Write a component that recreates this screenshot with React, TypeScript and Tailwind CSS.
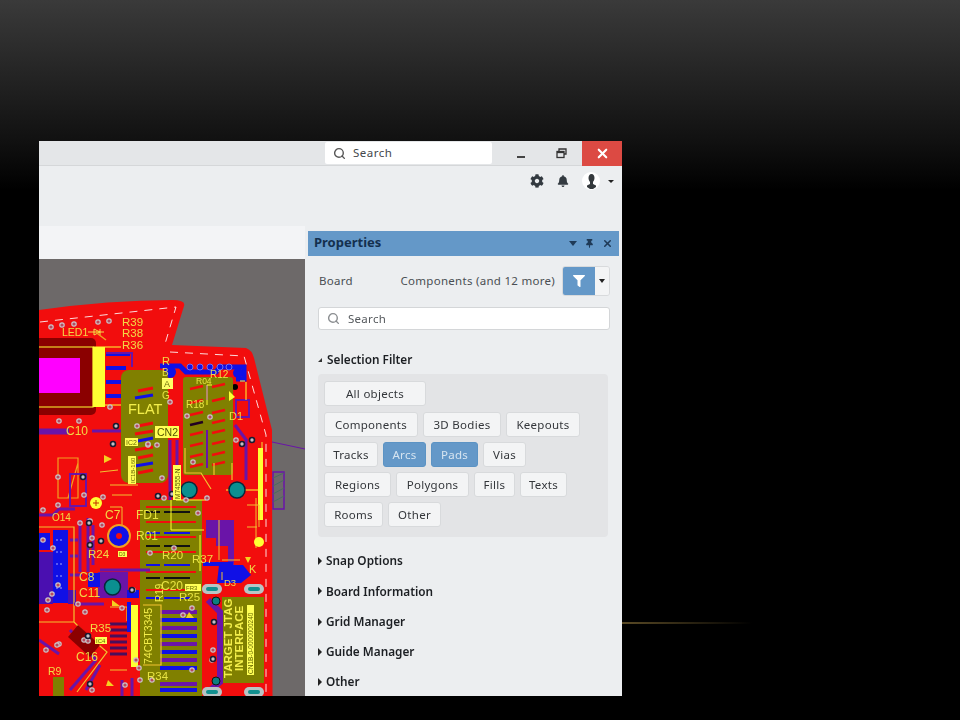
import { FaBell, FaCog, FaFilter, FaThumbtack } from 'react-icons/fa'
import { Search, X } from 'lucide-react'

const red = '#f20d0d'
const olive = '#808000'
const blue = '#1010e6'
const purple = '#6a14a8'
const gold = '#f2c230'
const yellow = '#ffff33'

const vias = [
  [51, 327], [62, 325], [74, 324], [98, 322], [109, 321], [59, 421], [79, 421], [110, 407], [137, 426], [148, 445],
  [148, 444], [157, 445], [170, 402], [187, 416], [210, 417], [193, 462], [162, 478], [236, 440], [252, 440], [164, 498],
  [207, 498], [58, 477], [103, 497], [84, 495], [43, 510], [58, 505], [80, 523], [90, 521], [102, 525], [92, 538],
  [43, 540], [53, 548], [58, 585], [52, 594], [48, 600], [47, 610], [78, 604], [85, 612], [84, 640], [88, 641],
  [59, 644], [46, 650], [57, 645], [122, 608], [133, 590], [136, 660], [139, 668], [125, 685], [92, 690], [140, 680],
  [152, 680], [192, 608], [183, 615], [192, 670], [213, 650], [212, 660], [150, 553], [174, 548], [198, 513], [186, 500],
]

const blackVias = [
  [116, 426], [113, 444], [83, 477], [172, 494], [252, 440], [242, 444], [89, 523], [90, 545], [132, 590], [214, 622],
  [213, 659], [90, 684], [88, 636], [158, 496], [101, 541],
]

const labels: [string, number, number, number?][] = [
  ['R39', 122, 326, 11.5], ['R38', 122, 337, 11.5], ['R36', 122, 349, 11.5], ['LED1', 62, 336, 10.5], ['C10', 66, 435, 12],
  ['R', 162, 365, 11], ['B', 162, 376, 10], ['G', 162, 399, 10], ['R12', 210, 378, 10], ['R04', 196, 384, 8.5],
  ['R18', 186, 408, 10], ['D1', 229, 420, 11], ['C7', 105, 519, 12], ['FD1', 136, 519, 12], ['R01', 136, 540, 12],
  ['R24', 88, 558, 11.5], ['R20', 162, 559, 11.5], ['R37', 192, 563, 11.5], ['C8', 79, 581, 12], ['C11', 79, 597, 12],
  ['C20', 161, 590, 12], ['R25', 179, 601, 11.5], ['R35', 90, 632, 11.5], ['C16', 76, 661, 12], ['D3', 224, 586, 9.5],
  ['K', 249, 573, 11], ['R9', 48, 675, 10.5], ['R34', 147, 680, 11.5], ['O14', 52, 521, 10],
]

const boxes: [string, number, number, number, number][] = [
  ['IC2', 125, 438, 13, 8], ['D3', 118, 551, 9, 6], ['FR3', 185, 584, 16, 7], ['IC4', 95, 637, 12, 7],
]

const Pcb = () => (
  <svg viewBox="39 259 266 437" className="block h-full w-full blur-[0.5px]">
    <rect x="39" y="259" width="266" height="437" fill="#6d6969" />
    <path d="M272 442 L305 449" stroke={purple} strokeWidth="1" />
    <path d="M273 472h11v37h-11z" fill="#6d6969" stroke={purple} strokeWidth="1.5" />
    <path d="M273 478l11-5M273 486l11-6M273 494l11-6M273 502l11-6" stroke="#4a6a60" strokeWidth="1" />
    <path d="M39 310 Q110 300 172 300 Q186 300 184 306 L172 345 L246 348 Q252 350 254 358 L272 430 L272.5 696 L39 696Z" fill={red} />
    <path d="M40 322 L176 307 L165 344 M170 352 L244 356 L266 435 L266 696" fill="none" stroke="#fff" strokeWidth="1" strokeDasharray="8 7" opacity=".85" />

    {/* top left part */}
    <rect x="30" y="338" width="66" height="77" rx="5" fill="#8b0000" />
    <rect x="39" y="358" width="41" height="35" fill="#ff00ff" />
    <path d="M39 347H93V407H39" fill="none" stroke={yellow} strokeWidth="1.2" />
    <rect x="93" y="347" width="12" height="60" fill={yellow} />
    <path d="M93 347H121M105 405H121" stroke={yellow} strokeWidth="1.2" />
    <path d="M106 354h24M106 368h20M106 382h20M106 396h18" stroke={blue} strokeWidth="4" fill="none" />
    <path d="M106 353h26v14" stroke={purple} strokeWidth="2" fill="none" />
    <path d="M160 366h20l6 6h30l4-5h24v12h-8" stroke={blue} strokeWidth="5" fill="none" />
    {[190, 200, 210, 220, 229].map(x => (
      <circle key={x} cx={x} cy="367" r="3" fill={blue} stroke="#7070f0" strokeWidth="1" />
    ))}
    <circle cx="170" cy="372" r="6" fill={blue} />
    <circle cx="238" cy="373" r="5" fill={blue} />
    <circle cx="235" cy="387" r="3" fill="#000" />
    <path d="M236 400h13v17h-13z" fill="none" stroke={purple} strokeWidth="2" />
    <path d="M39 430h30M39 433h30M92 431h30M170 440v60M177 440v60" stroke={purple} strokeWidth="3" />
    <path d="M235 425l12 16M246 440v40" stroke={purple} strokeWidth="3" fill="none" />

    {/* olive blocks */}
    <rect x="121" y="370" width="47" height="113" rx="8" fill={olive} />
    <rect x="183" y="377" width="50" height="98" rx="3" fill={olive} />
    <rect x="140" y="500" width="62" height="196" fill={olive} />
    <rect x="222" y="597" width="42" height="86" fill={olive} />
    <rect x="53" y="677" width="11" height="19" fill={olive} />
    {[388, 395, 423, 431, 438, 447, 455, 463, 470].map((y, i) => (
      <path key={y} d={`M${138 - (i % 2) * 3} ${y + 3}L${153} ${y}`} stroke={i % 3 === 1 ? blue : red} strokeWidth="3" />
    ))}
    {[384, 398, 410, 420, 430, 441, 452, 462].map((y, i) => (
      <g key={y}>
        <path d={`M190 ${y + 5}L203 ${y + 2}`} stroke={i === 3 ? '#220022' : red} strokeWidth="2.5" />
        <path d={`M212 ${y + 3}L225 ${y}`} stroke={red} strokeWidth="2.5" />
      </g>
    ))}
    <path d="M207 430v38M207 385v15" stroke={purple} strokeWidth="2" />
    <path d="M185 448v25h16l10 16M214 463v12M232 463v17M262 480v-38" stroke={gold} strokeWidth="1.2" fill="none" />
    <path d="M212 385h-5v20M245 381h-5M246 382v18" stroke={yellow} strokeWidth="1" fill="none" />
    <path d="M229 391l6 6-6 4z" fill={yellow} />

    {/* lower stripes */}
    {[507, 512, 522, 533, 537, 546, 552, 565, 572, 578, 590, 598].map((y, i) => (
      <path key={y} d={`M146 ${y}H196`} stroke={i % 4 === 3 ? blue : i % 2 ? '#111' : red} strokeWidth="2" strokeDasharray={i % 2 ? '14 4 26 6' : undefined} />
    ))}
    {[612, 620, 628, 636, 644, 652, 660, 668, 684, 690].map((y, i) => (
      <path key={y} d={`M160 ${y}H197`} stroke={i % 2 ? blue : purple} strokeWidth="4" />
    ))}
    {[624, 630, 636, 642, 648, 654].map(y => (
      <path key={y} d={`M110 ${y}H127`} stroke="#4a0d5c" strokeWidth="3" />
    ))}
    <path d="M110 607h17v14M110 670h17M143 605H161V665H143" stroke={gold} strokeWidth="1.2" fill="none" />
    <path d="M171 500v30h33M200 535v36M176 500h30M226 490h35" stroke={yellow} strokeWidth="1" fill="none" />
    <rect x="131" y="605" width="7" height="62" fill={yellow} />
    <rect x="127" y="602" width="4" height="30" fill={blue} />

    {/* left section */}
    <path d="M58 458h20v40H58zM68 498l10-35" fill="none" stroke="#f2a020" strokeWidth="1.2" />
    <path d="M70 474h16v32H70z" fill="none" stroke={purple} strokeWidth="2" />
    <path d="M110 485h28M112 495h20M110 507h12v24M118 470l-18 2" stroke={gold} strokeWidth="1" fill="none" />
    <path d="M39 515h14l6-6h16M80 520v52M88 518v54M93 525v40M39 572h14M39 590h14M70 540h8M70 556h8M70 575h12" stroke={purple} strokeWidth="3" fill="none" />
    <path d="M53 530h15v73H53zM39 533h11v17H39z" fill={blue} />
    <path d="M39 552h14v52H39zM68 590h8v14h-8z" fill="#4a0fb0" />
    <path d="M56 540h8M56 552h8M56 564h8M56 576h8M56 588h8" stroke="#5a5af0" strokeWidth="2" strokeDasharray="2 2" />
    <path d="M39 527H74V622H39M74 622l12 12L107 652l-30 40" fill="none" stroke={gold} strokeWidth="1.2" />
    <path d="M100 570h50M74 604h30" stroke={purple} strokeWidth="3" fill="none" />
    <path d="M98 572h30v26h-30z" fill={purple} />
    <path d="M88 573h12v14H88zM127 590h12v8h-12z" fill={blue} />
    <path d="M39 640l20 14M70 630l26 30M96 660l-26 30M100 665l-14 25M122 680v16M132 678v18" stroke={purple} strokeWidth="3" fill="none" />
    <path d="M78 625l22 20-10 12-22-20z" fill="#8b0000" />
    <path d="M206 520h28v52h-6v-26h-12v-8h-10z" fill={purple} />
    <path d="M203 562h30v4h-30zM219 565h24l8 10-10 8h-24z" fill={blue} />
    <path d="M222 560h18M222 572v8M219 520v40" stroke={gold} strokeWidth="1" fill="none" />
    <path d="M208 600l12 12v70l-12 10" stroke={purple} strokeWidth="6" fill="none" />
    <path d="M256 498v50" stroke={gold} strokeWidth="1" />
    <rect x="258" y="448" width="5" height="72" fill={yellow} />
    <path d="M247 505h12v22M247 527h10" stroke={gold} strokeWidth="1" fill="none" />

    {/* pads and holes */}
    {[[189, 490], [237, 490], [112.5, 587]].map(([x, y]) => (
      <circle key={x} cx={x} cy={y} r="8" fill="#0b8f90" stroke="#07283a" strokeWidth="1.5" />
    ))}
    <circle cx="119" cy="536" r="11" fill={blue} stroke="#f2a020" strokeWidth="2" />
    <circle cx="119" cy="536" r="3" fill={red} />
    <circle cx="96" cy="503" r="6" fill={yellow} />
    <path d="M93 503h6M96 500v6" stroke="#c03000" strokeWidth="1" />
    <circle cx="259" cy="542" r="5" fill={yellow} />
    <circle cx="216" cy="601" r="4" fill="#0b7f80" stroke="#111" />
    <circle cx="216" cy="681" r="4" fill="#0b7f80" stroke="#111" />
    {[[212, 589], [254, 589], [212, 692], [254, 692]].map(([x, y]) => (
      <g key={`${x}-${y}`}>
        <rect x={x - 10} y={y - 5} width="20" height="10" rx="5" fill="#b9c4c4" />
        <rect x={x - 6} y={y - 2} width="12" height="4" rx="2" fill="#12908f" />
      </g>
    ))}
    {vias.map(([x, y]) => (
      <circle key={`${x}-${y}`} cx={x} cy={y} r="2.2" fill="#b84a5e" stroke="#c9c3c8" strokeWidth="1.2" />
    ))}
    {blackVias.map(([x, y]) => (
      <circle key={`b${x}-${y}`} cx={x} cy={y} r="2.5" fill="#c4c0c4" stroke="#1a1a30" strokeWidth="1.6" />
    ))}
    <path d="M88 332h16M94 329v6l6-3zM100 329v6" stroke="#f4e04a" strokeWidth="1" fill="none" />
    <path d="M106 340l-8-6q-3-3 0-3" stroke="#f2a020" strokeWidth="1.5" fill="none" />
    <path d="M104 455l8 4-8 4zM112 600l8 6h-8zM108 680l6 6h-8zM189 612l5 6h-8zM245 557l3 6 3-6z" fill="#f5d020" />

    {/* silkscreen text */}
    <g fontFamily="Liberation Sans, sans-serif" fill="#f3ee4a">
      {labels.map(([t, x, y, s]) => (
        <text key={`${t}${x}`} x={x} y={y} fontSize={s ?? 10.5} opacity=".9">{t}</text>
      ))}
      <text x="128" y="414" fontSize="14.5">FLAT</text>
      <rect x="162" y="378" width="11" height="11" fill="#ffff66" />
      <text x="164" y="387" fontSize="9" fill="#70700a">A</text>
      <rect x="155" y="426" width="24" height="12" fill="#ffff55" />
      <text x="157" y="436" fontSize="10.5" fill="#555500">CN2</text>
      {boxes.map(([t, x, y, w, h]) => (
        <g key={t}>
          <rect x={x} y={y} width={w} height={h} fill="#ffff55" />
          <text x={x + 1} y={y + h - 1} fontSize={h - 1} fill="#666600">{t}</text>
        </g>
      ))}
      <rect x="128" y="456" width="8" height="28" fill="#ffff55" />
      <text transform="translate(134.5 483) rotate(-90)" fontSize="6" fill="#666600">IC1B-160</text>
      <rect x="173" y="465" width="8" height="35" fill="#ffff55" />
      <text transform="translate(179.5 499) rotate(-90)" fontSize="6.5" fill="#555500">M74555-N</text>
      <text transform="translate(152 664) rotate(-90)" fontSize="10.5">74CBT3345</text>
      <text transform="translate(163 602) rotate(-90)" fontSize="10">R19</text>
      <text transform="translate(232 678) rotate(-90)" fontSize="11.5" fontWeight="700">TARGET JTAG</text>
      <text transform="translate(243 671) rotate(-90)" fontSize="11.5" fontWeight="700">INTERFACE</text>
      <rect x="247" y="605" width="7" height="70" fill="#ffff55" />
      <text transform="translate(253 674) rotate(-90)" fontSize="6.5" fill="#666600">CN1B-0-0000000240</text>
    </g>
  </svg>
)

const Btn = ({ label, w, active }: { label: string; w: number; active?: boolean }) => (
  <div
    style={{ width: w }}
    className={
      active
        ? 'flex h-[25px] items-center justify-center rounded-[3px] border border-[#5b93c4] bg-[#6498c8] text-[#d6e4f0]'
        : 'flex h-[25px] items-center justify-center rounded-[3px] border border-[#d8dadc] bg-[#f3f4f5] text-[#33363a]'
    }
  >
    {label}
  </div>
)

const Section = ({ label }: { label: string }) => (
  <div className="flex h-[30.25px] items-center gap-[4px] pl-[10px] text-[11.8px] font-semibold text-[#1c1f23]">
    <span className="h-0 w-0 border-y-[4px] border-l-[4px] border-y-transparent border-l-[#222]" />
    {label}
  </div>
)

export default function App() {
  return (
    <div className="relative h-[720px] w-[960px] overflow-hidden bg-[linear-gradient(to_bottom,#3a3a3a_0px,#111_140px,#000_190px)] pl-[39px] pt-[141px] font-['Noto_Sans',sans-serif]">
      <div className="absolute left-[622px] top-[622px] h-[1.5px] w-[130px] bg-[linear-gradient(to_right,#5a4a25,#000)]" />
      <div className="flex h-[555px] w-[583px] flex-col bg-[#eceef0] blur-[0.3px]">
        {/* title bar */}
        <div className="flex h-[25px] items-center justify-end border-b border-[#d5d7d9] bg-[#e4e6e8]">
          <div className="mr-[25px] flex h-[22px] w-[167px] items-center gap-[7px] rounded-[2px] bg-white pl-[8px] text-[11.5px] tracking-[0.5px] text-[#44484c]">
            <Search size={13} strokeWidth={2.6} className="text-[#555]" />
            Search
          </div>
          <div className="mr-[31px] mt-[8px] h-[2px] w-[8px] bg-[#444]" />
          <svg width="11" height="11" viewBox="0 0 11 11" className="mr-[15px]" fill="none" stroke="#333" strokeWidth="1.3">
            <path d="M3 3V1h7v5H8" />
            <rect x="1" y="3.5" width="7" height="6" />
            <path d="M1 4.5h7" />
          </svg>
          <div className="flex h-[25px] w-[40px] items-center justify-center bg-[#dc4a43]">
            <X size={15} strokeWidth={3.4} className="text-white" />
          </div>
        </div>
        {/* toolbar */}
        <div className="flex h-[60px] justify-end pr-[8px] pt-[5px]">
          <div className="flex h-[20px] items-center text-[#333a40]">
            <FaCog size={14} />
            <FaBell size={12} className="ml-[13px]" />
            <div className="ml-[13px] flex h-[18px] w-[18px] items-center justify-center rounded-full bg-white">
              <svg width="9" height="15" viewBox="0 0 9 15" fill="#34393d">
                <path d="M4.5 0C6.5 0 7.5 2 7.5 4S6.5 7 6 8v2l3 1.5V13L6 15H3L0 13v-1.500l3-1.500V8C2.500 7 1.500 6 1.500 4S2.500 0 4.500 0z" />
              </svg>
            </div>
            <span className="ml-[8px] h-0 w-0 border-x-[3px] border-t-[3px] border-x-transparent border-t-[#222]" />
          </div>
        </div>
        <div className="flex min-h-0 flex-1">
          {/* canvas */}
          <div className="flex w-[266px] flex-col bg-[#f3f4f6]">
            <div className="h-[33px]" />
            <div className="min-h-0 flex-1">
              <Pcb />
            </div>
          </div>
          {/* properties panel */}
          <div className="flex min-w-0 flex-1 flex-col bg-[#eceef0] pl-[3px] pt-[5px] text-[11.5px] tracking-[0.28px]">
            <div className="mr-[3px] flex h-[25px] shrink-0 items-center justify-between bg-[#6498c8] pl-[6px] pr-[6px]">
              <span className="-mt-[2px] text-[13px] font-bold tracking-normal text-[#14304f]">Properties</span>
              <div className="flex items-center gap-[8px] text-[#1f3a57]">
                <span className="h-0 w-0 border-x-[4px] border-t-[5px] border-x-transparent border-t-[#1f3a57]" />
                <FaThumbtack size={9} />
                <X size={11} strokeWidth={3.4} />
              </div>
            </div>
            <div className="ml-[10px] mr-[12px] mt-[10px] flex h-[30px] shrink-0 items-center justify-between text-[#4a4e53]">
              <span className="pl-px">Board</span>
              <div className="flex items-center gap-[7px]">
                <span>Components (and 12 more)</span>
                <div className="flex h-[30px] w-[48px] overflow-hidden rounded-[3px] border border-[#d8dadc]">
                  <div className="flex w-[32px] items-center justify-center bg-[#6498c8]">
                    <FaFilter size={12} className="text-white" />
                  </div>
                  <div className="flex flex-1 items-center justify-center bg-[#f3f4f5]">
                    <span className="h-0 w-0 border-x-[3.5px] border-t-[4px] border-x-transparent border-t-[#222]" />
                  </div>
                </div>
              </div>
            </div>
            <div className="ml-[10px] mr-[12px] mt-[11px] flex h-[23px] shrink-0 items-center gap-[8px] rounded-[3px] border border-[#d4d6d8] bg-white pl-[8px] text-[#55595d]">
              <Search size={13} strokeWidth={2.6} className="text-[#8a8d90]" />
              Search
            </div>
            <div className="ml-[10px] mt-[22px] flex h-[16px] shrink-0 items-center gap-[5px] text-[11.8px] font-semibold tracking-normal text-[#1c1f23]">
              <span className="h-0 w-0 border-b-[4px] border-l-[4px] border-b-[#333] border-l-transparent" />
              Selection Filter
            </div>
            <div className="ml-[10px] mr-[14px] mt-[6px] h-[163px] shrink-0 rounded-[4px] bg-[#e3e4e6] pl-[6px] pt-[7px]">
              <Btn label="All objects" w={102} />
              <div className="mt-[6px] flex gap-[5px]">
                <Btn label="Components" w={94} />
                <Btn label="3D Bodies" w={78} />
                <Btn label="Keepouts" w={74} />
              </div>
              <div className="mt-[5px] flex gap-[5px]">
                <Btn label="Tracks" w={54} />
                <Btn label="Arcs" w={43} active />
                <Btn label="Pads" w={47} active />
                <Btn label="Vias" w={43} />
              </div>
              <div className="mt-[5px] flex gap-[5px]">
                <Btn label="Regions" w={67} />
                <Btn label="Polygons" w={73} />
                <Btn label="Fills" w={41} />
                <Btn label="Texts" w={47} />
              </div>
              <div className="mt-[5px] flex gap-[5px]">
                <Btn label="Rooms" w={59} />
                <Btn label="Other" w={53} />
              </div>
            </div>
            <div className="mt-[9px] tracking-normal">
              <Section label="Snap Options" />
              <Section label="Board Information" />
              <Section label="Grid Manager" />
              <Section label="Guide Manager" />
              <Section label="Other" />
            </div>
          </div>
        </div>
      </div>
    </div>
  )
}
